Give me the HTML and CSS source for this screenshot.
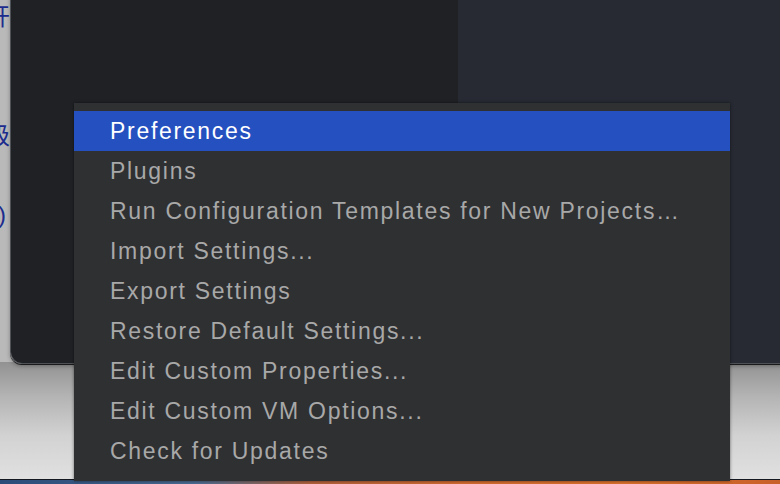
FILE: index.html
```html
<!DOCTYPE html>
<html>
<head>
<meta charset="utf-8">
<link rel="stylesheet" href="styles.css">
</head>
<body>
<div class="desktop">
  <div class="doc">
    <div class="doc-line l1">开</div>
    <div class="doc-line l2">级</div>
    <div class="doc-line l3">)</div>
  </div>
  <div class="window">
    <div class="pane-left"></div>
    <div class="pane-right"></div>
  </div>
  <div class="dock-strip"></div>
  <div class="menu">
    <div class="item active">Preferences</div>
    <div class="item">Plugins</div>
    <div class="item">Run Configuration Templates for New Projects…</div>
    <div class="item">Import Settings...</div>
    <div class="item">Export Settings</div>
    <div class="item">Restore Default Settings...</div>
    <div class="item">Edit Custom Properties...</div>
    <div class="item">Edit Custom VM Options...</div>
    <div class="item">Check for Updates</div>
  </div>
</div>
</body>
</html>
```
FILE: styles.css
```css
html, body {
  margin: 0;
  padding: 0;
  width: 780px;
  height: 484px;
  overflow: hidden;
}
.desktop {
  position: relative;
  width: 780px;
  height: 484px;
  overflow: hidden;
  background: linear-gradient(180deg, #8e8e8e 0%, #8e8e8e 74%, #b4b4b4 82%, #d2d2d2 90%, #e2e2e2 100%);
}
.doc {
  position: absolute;
  left: -14px;
  top: 0;
  width: 40px;
  height: 362px;
  background: #b9b9b9;
  font-family: "Noto Sans CJK SC", sans-serif;
  font-size: 24px;
  color: #1c2c8e;
}
.doc-line { position: absolute; left: 0; line-height: 28px; }
.l1 { top: 1px; }
.l2 { top: 120px; }
.l3 { top: 201px; left: 12px; font-family: "Liberation Sans", sans-serif; }
.window {
  position: absolute;
  left: 10px;
  top: -20px;
  width: 800px;
  height: 382px;
  display: flex;
  border: 1px solid #4e5257;
  border-radius: 12px;
  overflow: hidden;
  box-shadow: 0 1px 0 #1a1a1a, 0 2px 4px rgba(0,0,0,0.3);
}
.pane-left {
  width: 447px;
  background: #1f2125;
}
.pane-right {
  flex: 1;
  background: #272a33;
}
.dock-strip {
  position: absolute;
  left: 0;
  right: 0;
  bottom: 0;
  height: 4px;
  border-top: 1px solid #141820;
  background: linear-gradient(90deg, #2a4a78 0%, #4a6a90 25%, #b0603a 40%, #d06a30 60%, #d8702c 80%, #c8602a 100%);
}
.menu {
  position: absolute;
  left: 74px;
  top: 103px;
  width: 656px;
  height: 378px;
  background: #2f3032;
  padding-top: 8px;
  box-sizing: border-box;
  box-shadow: 0 0 3px rgba(0,0,0,0.5);
  font-family: "Liberation Sans", Arial, sans-serif;
  font-size: 23px;
  letter-spacing: 1.7px;
  color: #a8a8a8;
}
.item {
  height: 40px;
  line-height: 40px;
  padding-left: 36px;
  white-space: nowrap;
}
.item.active {
  background: #2450c0;
  color: #ffffff;
}
```
